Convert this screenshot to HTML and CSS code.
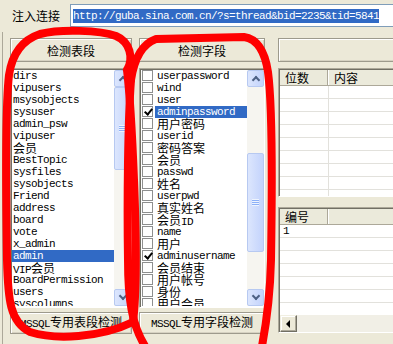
FILE: index.html
```html
<!DOCTYPE html>
<html lang="zh-CN">
<head>
    <meta charset="UTF-8">
    <title>注入检测</title>
    <link rel="stylesheet" href="styles.css">
</head>
<body>
    <div class="window">
        <div class="urlbar">
            <span class="lbl">注入连接</span>
            <div class="url"><span class="sel">http://guba.sina.com.cn/?s=thread&amp;bid=2235&amp;tid=5841</span></div>
        </div>

        <div class="panel">
            <!-- tables -->
            <div class="col col-tables">
                <button class="btn btn-top">检测表段</button>
                <div class="listbox">
                    <ul class="items">
                        <li>dirs</li>
                        <li>vipusers</li>
                        <li>msysobjects</li>
                        <li>sysuser</li>
                        <li>admin_psw</li>
                        <li>vipuser</li>
                        <li><span class="cj">会员</span></li>
                        <li>BestTopic</li>
                        <li>sysfiles</li>
                        <li>sysobjects</li>
                        <li>Friend</li>
                        <li>address</li>
                        <li>board</li>
                        <li>vote</li>
                        <li>x_admin</li>
                        <li class="sel">admin</li>
                        <li>VIP<span class="cj">会员</span></li>
                        <li>BoardPermission</li>
                        <li>users</li>
                        <li>syscolumns</li>
                    </ul>
                    <div class="vscroll">
                        <div class="sb-btn up"></div>
                        <div class="sb-thumb thumb-tables"><i></i></div>
                        <div class="sb-track"></div>
                        <div class="sb-btn down"></div>
                    </div>
                </div>
                <button class="btn btn-bottom">MSSQL<span class="cj">专用表段检测</span></button>
            </div>

            <!-- fields -->
            <div class="col col-fields">
                <button class="btn btn-top">检测字段</button>
                <div class="listbox">
                    <ul class="items checks">
                        <li><b class="chk"></b><span>userpassword</span></li>
                        <li><b class="chk"></b><span>wind</span></li>
                        <li><b class="chk"></b><span>user</span></li>
                        <li class="sel"><b class="chk on"></b><span>adminpassword</span></li>
                        <li><b class="chk"></b><span class="cj">用户密码</span></li>
                        <li><b class="chk"></b><span>userid</span></li>
                        <li><b class="chk"></b><span class="cj">密码答案</span></li>
                        <li><b class="chk"></b><span class="cj">会员</span></li>
                        <li><b class="chk"></b><span>passwd</span></li>
                        <li><b class="chk"></b><span class="cj">姓名</span></li>
                        <li><b class="chk"></b><span>userpwd</span></li>
                        <li><b class="chk"></b><span class="cj">真实姓名</span></li>
                        <li><b class="chk"></b><span><em class="cj">会员</em>ID</span></li>
                        <li><b class="chk"></b><span>name</span></li>
                        <li><b class="chk"></b><span class="cj">用户</span></li>
                        <li><b class="chk on"></b><span>adminusername</span></li>
                        <li><b class="chk"></b><span class="cj">会员结束</span></li>
                        <li><b class="chk"></b><span class="cj">用户帐号</span></li>
                        <li><b class="chk"></b><span class="cj">身份</span></li>
                        <li><b class="chk"></b><span class="cj">用户会员</span></li>
                    </ul>
                    <div class="vscroll">
                        <div class="sb-btn up"></div>
                        <div class="sb-track track-fields"></div>
                        <div class="sb-thumb thumb-fields"><i></i></div>
                        <div class="sb-track"></div>
                        <div class="sb-btn down"></div>
                    </div>
                </div>
                <button class="btn btn-bottom">MSSQL<span class="cj">专用字段检测</span></button>
            </div>

            <!-- results -->
            <div class="col col-result">
                <div class="btn btn-top blank"></div>
                <div class="lv lv-bits">
                    <div class="lv-head">
                        <span class="c1">位数</span>
                        <span class="c2">内容</span>
                    </div>
                    <div class="row"><span class="c1"></span><span class="c2"></span></div>
                    <div class="row"><span class="c1"></span><span class="c2"></span></div>
                    <div class="row"><span class="c1"></span><span class="c2"></span></div>
                    <div class="row"><span class="c1"></span><span class="c2"></span></div>
                    <div class="row"><span class="c1"></span><span class="c2"></span></div>
                    <div class="row"><span class="c1"></span><span class="c2"></span></div>
                    <div class="row"><span class="c1"></span><span class="c2"></span></div>
                    <div class="row"><span class="c1"></span><span class="c2"></span></div>
                    <div class="row"><span class="c1"></span><span class="c2"></span></div>
                </div>
                <div class="lv lv-ids">
                    <div class="lv-head">
                        <span class="c1">编号</span>
                    </div>
                    <div class="rows">
                        <div class="row"><span class="c1 num">1</span></div>
                        <div class="row"></div>
                        <div class="row"></div>
                        <div class="row"></div>
                        <div class="row"></div>
                        <div class="row"></div>
                        <div class="row"></div>
                    </div>
                    <div class="hscroll">
                        <div class="hs-btn"></div>
                        <div class="hs-track"></div>
                    </div>
                </div>
            </div>
        </div>

        <!-- red marker circles drawn over the screenshot -->
        <svg class="marks" viewBox="0 0 393 344" width="393" height="344">
            <path d="M127 70 C134 58 130 42 116 36 C100 30 60 29 40 34 C22 40 12 55 9 75 C5 110 6 200 7 260 C8 300 10 322 30 332 C55 340 100 338 133 322 C137 290 136 230 134 180 C132 130 130 95 127 70"/>
            <path d="M131 80 C134 60 142 44 156 39 L244 37 C258 39 265 52 268 72 C273 110 272 200 271 260 C270 300 266 325 262 346"/>
            <path d="M131 80 C128 120 127 200 128 260 C128 300 132 325 145 346"/>
        </svg>
    </div>
</body>
</html>
```

FILE: styles.css
```css
body {
    margin: 0;
    background: #ECE9D8;
    font-family: 'Liberation Mono', 'Noto Sans CJK SC', monospace;
    color: #000;
}

.window {
    position: relative;
    width: 393px;
    height: 344px;
    overflow: hidden;
}

.cj {
    font-family: 'Noto Sans CJK SC', sans-serif;
    font-size: 12px;
    font-style: normal;
    line-height: 12px;
    letter-spacing: 0;
}

/* url row */
.urlbar {
    display: flex;
    align-items: flex-start;
    height: 32px;
    padding: 4px 0 0 12px;
    box-sizing: border-box;
}

.urlbar .lbl {
    width: 58px;
    font-family: 'Noto Sans CJK SC', sans-serif;
    font-size: 12px;
    line-height: 23px;
}

.url {
    flex: 1;
    height: 23px;
    margin-right: -20px;
    padding-left: 2px;
    box-sizing: border-box;
    border: 1px solid #7F9DB9;
    background: #fff;
    display: flex;
    align-items: center;
}

.url .sel {
    background: #316AC5;
    color: #fff;
    font-size: 11px;
    letter-spacing: -0.6px;
    line-height: 14px;
    white-space: nowrap;
}

/* main panel */
.panel {
    display: flex;
    height: 312px;
    margin-left: 2px;
    padding: 6px 0 0 7px;
    box-sizing: border-box;
    border-left: 1px solid #ACA899;
}

.col {
    display: flex;
    flex-direction: column;
}

.col-tables { width: 122px; }
.col-fields { width: 126px; margin-left: 7px; }
.col-result { flex: 1; margin-left: 13px; margin-right: -10px; }

.btn {
    margin: 0;
    padding: 0;
    box-sizing: border-box;
    background: #ECE9D8;
    border: 1px solid #9D9A8C;
    box-shadow: inset 1px 1px #fff, inset -1px -1px #D6D2C2;
    font-family: 'Liberation Mono', monospace;
    font-size: 11px;
    letter-spacing: -0.6px;
    color: #000;
    text-align: center;
}

.btn .cj { letter-spacing: 0; }

.btn-top {
    height: 24px;
    font-family: 'Noto Sans CJK SC', sans-serif;
    font-size: 12px;
    letter-spacing: 0;
}

.btn-bottom {
    height: 22px;
    margin-top: 4px;
}

/* list boxes */
.listbox {
    display: flex;
    height: 240px;
    margin-top: 6px;
    box-sizing: border-box;
    border: 1px solid;
    border-color: #ACA899 #fff #fff #ACA899;
    box-shadow: inset 1px 1px #716F64;
    background: #fff;
    padding: 1px 0 1px 1px;
    overflow: hidden;
}

.items {
    flex: 1;
    margin: 0;
    padding: 0;
    list-style: none;
    overflow: hidden;
}

.items li {
    height: 12px;
    line-height: 12px;
    padding-left: 1px;
    font-size: 11px;
    letter-spacing: -0.6px;
    white-space: nowrap;
}

.items li.sel {
    background: #316AC5;
    color: #fff;
}

.checks li {
    display: flex;
    align-items: flex-start;
    padding-left: 1px;
}

.checks li.sel {
    background: none;
    color: #000;
}

.checks li > span {
    flex: 1;
    height: 12px;
    margin-left: 2px;
    padding-left: 2px;
}

.checks li.sel > span {
    background: #316AC5;
    color: #fff;
}

.chk {
    position: relative;
    width: 11px;
    height: 11px;
    box-sizing: border-box;
    border: 1px solid #8E8F8F;
    background: #fff;
}

.chk.on::after {
    content: '';
    position: absolute;
    left: 3px;
    top: 0;
    width: 3px;
    height: 6px;
    border: solid #000;
    border-width: 0 2px 2px 0;
    transform: rotate(40deg);
}

/* xp scrollbar */
.vscroll {
    width: 17px;
    display: flex;
    flex-direction: column;
    background: #F6F5F0;
}

.sb-btn,
.sb-thumb {
    position: relative;
    box-sizing: border-box;
    border: 1px solid #B7C9F1;
    border-radius: 2px;
    background: linear-gradient(90deg, #DCE6FD, #C3D3FC);
}

.sb-btn {
    height: 17px;
}

.sb-btn::after {
    content: '';
    position: absolute;
    left: 5px;
    width: 4px;
    height: 4px;
    border: solid #4D6185;
    border-width: 2px 0 0 2px;
}

.sb-btn.up::after { top: 6px; transform: rotate(45deg); }
.sb-btn.down::after { top: 3px; transform: rotate(225deg); }

.sb-track { flex: 1; }
.track-fields { flex: 0 0 66px; }

.sb-thumb { flex: 0 0 83px; }
.thumb-fields { flex: 0 0 99px; }

.sb-thumb i {
    position: absolute;
    left: 4px;
    top: 50%;
    width: 7px;
    height: 7px;
    margin-top: -4px;
    background: repeating-linear-gradient(180deg, #EEF4FE 0 1px, #8CB0F8 1px 2px);
}

/* list views */
.lv {
    display: flex;
    flex-direction: column;
    box-sizing: border-box;
    border: 1px solid;
    border-color: #ACA899 #fff #fff #ACA899;
    box-shadow: inset 1px 1px #716F64;
    background: #fff;
    padding: 1px 0 0 1px;
    overflow: hidden;
}

.lv-bits { height: 129px; margin-top: 6px; }
.lv-ids { height: 126px; margin-top: 10px; }

.lv-head {
    display: flex;
    height: 15px;
    flex-shrink: 0;
    background: #EBEADB;
    border-bottom: 1px solid #ACA899;
    font-family: 'Noto Sans CJK SC', sans-serif;
    font-size: 12px;
    line-height: 15px;
}

.lv-head .c1 {
    width: 48px;
    padding-left: 5px;
    box-sizing: border-box;
    border-right: 1px solid #ACA899;
    box-shadow: 1px 0 #fff;
}

.lv-head .c2 { padding-left: 6px; }

.row {
    display: flex;
    height: 13px;
    flex-shrink: 0;
    box-sizing: border-box;
    border-bottom: 1px solid #E2E1DC;
}

.row .c1 {
    width: 48px;
    border-right: 1px solid #E2E1DC;
}

.rows {
    flex: 1;
    overflow: hidden;
}

.lv-ids .row .c1 { border-right: 0; }

.num {
    padding-left: 3px;
    font-size: 11px;
    line-height: 13px;
}

.hscroll {
    display: flex;
    height: 17px;
    flex-shrink: 0;
    background: #F1EFE6;
}

.hs-btn {
    position: relative;
    width: 17px;
    box-sizing: border-box;
    background: #ECE9D8;
    border: 1px solid;
    border-color: #F1EFE2 #716F64 #716F64 #F1EFE2;
    box-shadow: inset -1px -1px #ACA899, inset 1px 1px #fff;
}

.hs-btn::after {
    content: '';
    position: absolute;
    left: 5px;
    top: 4px;
    border-style: solid;
    border-width: 4px 4px 4px 0;
    border-color: transparent #000 transparent transparent;
}

.hs-track { flex: 1; }

/* red marks */
.marks {
    position: absolute;
    left: 0;
    top: 0;
    pointer-events: none;
}

.marks path {
    fill: none;
    stroke: #FF0000;
    stroke-width: 8;
    stroke-linecap: round;
    stroke-linejoin: round;
}
```
